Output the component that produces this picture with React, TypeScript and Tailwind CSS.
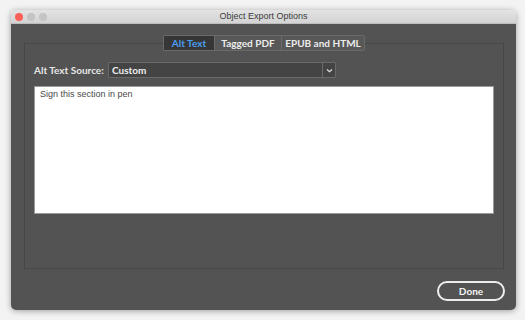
import React from 'react';

const font = { fontFamily: 'Lato, "Liberation Sans", sans-serif' };
const plain = { fontFamily: '"Liberation Sans", Arial, sans-serif' };

const App: React.FC = () => {
  return (
    <div className="w-[525px] h-[320px] bg-[#f3f3f3] pt-[10px] pl-[11px]" style={font}>
      <div className="w-[505px] h-[300px] rounded-[5px] overflow-hidden flex flex-col shadow-[0_1px_6px_rgba(0,0,0,0.35)]">
        {/* title bar */}
        <div className="relative h-[14px] bg-gradient-to-b from-[#e3e3e3] to-[#d3d3d3] flex items-center justify-center border-b border-[#bdbdbd]">
          <div className="absolute left-[4px] top-[3px] flex gap-[4px]">
            <span className="w-[8px] h-[8px] rounded-full bg-[#fc5f57]"></span>
            <span className="w-[8px] h-[8px] rounded-full bg-[#c4c4c4]"></span>
            <span className="w-[8px] h-[8px] rounded-full bg-[#c4c4c4]"></span>
          </div>
          <span className="text-[9px] leading-none text-[#3a3a3a]" style={plain}>
            Object Export Options
          </span>
        </div>

        {/* body */}
        <div className="flex-1 bg-[#535353] flex flex-col pl-[13px] pr-[12px] pt-[19px]">
          <div className="h-[226px] border border-[#474747] flex flex-col">
            <div className="flex justify-center -mt-[9px]">
              <div className="flex h-[16px] border border-[#6a6a6a] rounded-[2px] overflow-hidden text-[10px] font-bold leading-none whitespace-nowrap">
                <div className="w-[50px] flex items-center justify-center bg-[#363636] text-[#4a9df0]">Alt Text</div>
                <div className="w-[67px] flex items-center justify-center bg-[#585858] text-[#ececec] border-l border-[#6a6a6a]">Tagged PDF</div>
                <div className="w-[83px] flex items-center justify-center bg-[#585858] text-[#ececec] border-l border-[#6a6a6a]">EPUB and HTML</div>
              </div>
            </div>

            <div className="flex items-center mt-[11px] pl-[9px] h-[16px]">
              <span className="text-[10px] font-bold text-[#e6e6e6] w-[74px] leading-none whitespace-nowrap">Alt Text Source:</span>
              <div className="flex h-[16px] w-[228px] border border-[#6a6a6a] bg-[#444444] rounded-[1px]">
                <div className="flex-1 flex items-center pl-[3px] text-[10px] font-bold text-[#efefef] leading-none">Custom</div>
                <div className="w-[13px] border-l border-[#6a6a6a] flex items-center justify-center">
                  <svg width="7" height="5" viewBox="0 0 7 5">
                    <path d="M1 1.5 L3.5 3.8 L6 1.5" stroke="#e0e0e0" strokeWidth="1.2" fill="none" />
                  </svg>
                </div>
              </div>
            </div>

            <div className="mt-[8px] ml-[9px] w-[460px] h-[128px] bg-white border border-[#9a9a9a] pl-[5px] pt-[2px]">
              <span className="block text-[9px] text-[#4a4a4a] leading-[11px]" style={plain}>
                Sign this section in pen
              </span>
            </div>
          </div>

          <div className="flex justify-end mt-[12px] -mr-[1px]">
            <button className="w-[68px] h-[20px] rounded-full border-2 border-[#ededed] text-[10px] font-bold text-[#f2f2f2] leading-none flex items-center justify-center">
              Done
            </button>
          </div>
        </div>
      </div>
    </div>
  );
};

export default App;
